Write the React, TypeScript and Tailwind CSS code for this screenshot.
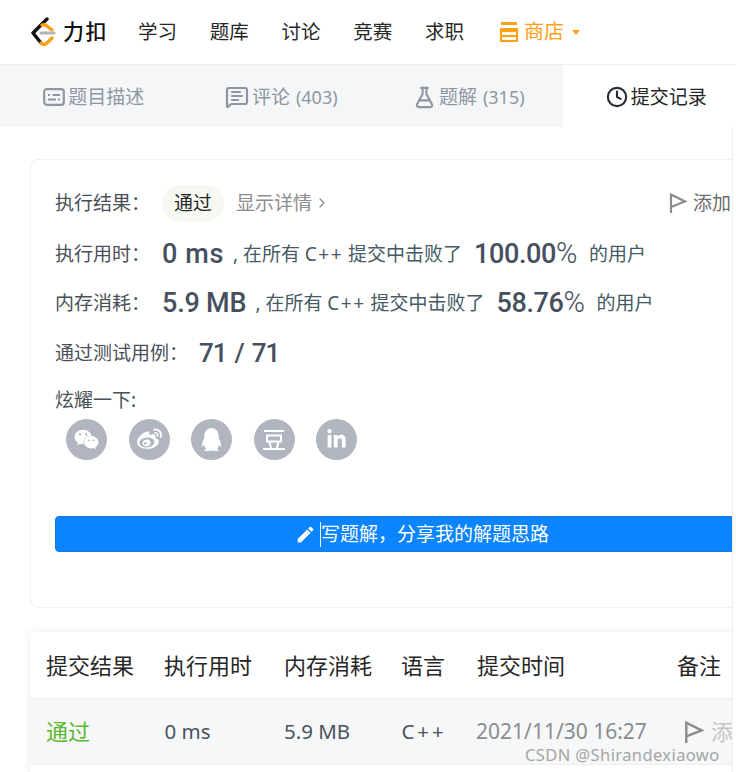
import { FaLinkedinIn, FaQq, FaWeibo, FaWeixin } from 'react-icons/fa'
import { MdEdit } from 'react-icons/md'
import { ChevronRight, Clock, FlaskConical, MessageSquareText } from 'lucide-react'

const cjk = "font-['Noto_Sans','Noto_Sans_CJK_SC',sans-serif]"
const din = "font-['Roboto','Noto_Sans_CJK_SC',sans-serif]"

function Logo() {
  return (
    <svg width="26" height="30" viewBox="0 0 26 30" fill="none">
      <path d="M17 2 L3 16 L11 26" stroke="#111" strokeWidth="3.4" strokeLinecap="round" strokeLinejoin="round" />
      <path d="M11 26 Q14 29 17 26 L22 21" stroke="#ffa116" strokeWidth="3.4" strokeLinecap="round" />
      <path d="M12 8 Q15 7 17 9 L22 13" stroke="#ffa116" strokeWidth="3.4" strokeLinecap="round" />
      <path d="M11 16 H24" stroke="#b3b3b3" strokeWidth="3" strokeLinecap="round" />
    </svg>
  )
}

function StoreIcon() {
  return (
    <svg width="20" height="20" viewBox="0 0 20 20" fill="none" stroke="#ffa116" strokeWidth="2.2">
      <path d="M2 1.5 H18" strokeWidth="3" />
      <path d="M1 6 H19 V9.5 H1 Z" fill="#ffa116" strokeWidth="0" />
      <rect x="2" y="9" width="16" height="10" />
      <path d="M2 14 H18" />
    </svg>
  )
}

function FlagIcon({ color = '#8c8c8c', size = 20 }: { color?: string; size?: number }) {
  return (
    <svg width={size} height={size} viewBox="0 0 20 20" fill="none" stroke={color} strokeWidth="2.2">
      <path d="M3 20 V1.5 L17 8.5 L3 14" strokeLinejoin="miter" />
    </svg>
  )
}

function CardIcon() {
  return (
    <svg width="22" height="18" viewBox="0 0 22 18" fill="none">
      <rect x="1.2" y="1.2" width="19.6" height="15.6" rx="2.5" stroke="#8f96a3" strokeWidth="2.2" />
      <path d="M5 7 H7 M9.5 7 H17 M5 11.5 H13 M15 11.5 H17" stroke="#8f96a3" strokeWidth="1.8" />
    </svg>
  )
}

function DoubanIcon() {
  return (
    <svg width="22" height="22" viewBox="0 0 22 22" fill="none" stroke="#fff" strokeWidth="2">
      <path d="M1 2 H21" />
      <rect x="4" y="6.5" width="14" height="6" />
      <path d="M6.5 13 L8 19 M15.5 13 L14 19" />
      <path d="M0 20 H22" />
    </svg>
  )
}

function Tab({ icon, label, count, active }: { icon: React.ReactNode; label: string; count?: string; active?: boolean }) {
  return (
    <div className={`flex items-center justify-center gap-[3px] relative text-[19px] pt-[2px] ${active ? 'bg-white text-[#262626]' : 'text-[#8f96a3]'}`}>
      {icon}
      <span>{label}</span>
      {count && <span className="text-[18px] ml-[3px]">{count}</span>}
    </div>
  )
}

function Social({ children }: { children: React.ReactNode }) {
  return <div className="w-[41px] h-[41px] rounded-full bg-[#b0b5bf] flex items-center justify-center text-white">{children}</div>
}

function Stat({ label, value, name, beat, valueClass }: { label: string; value: string; name: string; beat: string; valueClass: string }) {
  return (
    <div className="flex items-center h-[30px] whitespace-nowrap text-[#455a64]">
      <span className="w-[107px] text-[19px] text-[#4a4f57]">{label}</span>
      <span className={`${din} font-medium text-[27px] text-[#46505e] ${valueClass}`}>{value}</span>
      <span className="ml-[9px] text-[19px]">, 在所有 <span className="tracking-[1.5px]">{name}</span> 提交中击败了</span>
      <span className={`${din} font-medium text-[27px] text-[#46505e] ml-[12px] tracking-[-0.4px]`}>
        {beat}<span className="font-light text-[29px]">%</span>
      </span>
      <span className="ml-[12px] text-[19px]">的用户</span>
    </div>
  )
}

export default function App() {
  return (
    <div className={`${cjk} relative w-[736px] h-[772px] overflow-hidden bg-white`}>
      <header className="h-[65px] border-b border-[#eeeeee] flex items-center pl-[30px] text-[#262626]">
        <Logo />
        <span className="ml-[7px] text-[21px] font-medium text-[#111] tracking-[1.5px] w-[75px]">力扣</span>
        <nav className="flex items-center gap-[32.75px] text-[19.5px]">
          <span>学习</span>
          <span>题库</span>
          <span>讨论</span>
          <span>竞赛</span>
          <span>求职</span>
        </nav>
        <div className="ml-[35px] flex items-center text-[#ffa116] text-[20px]">
          <StoreIcon />
          <span className="ml-[5px]">商店</span>
          <span className="ml-[8px] w-0 h-0 border-x-[4px] border-x-transparent border-t-[5px] border-t-[#ffa116]" />
        </div>
      </header>

      <div className="w-[750px] h-[62px] grid grid-cols-4 bg-[#f5f6f8]">
        <Tab icon={<CardIcon />} label="题目描述" />
        <Tab icon={<MessageSquareText size={24} strokeWidth={2.2} />} label="评论" count="(403)" />
        <Tab icon={<FlaskConical size={23} strokeWidth={2.2} />} label="题解" count="(315)" />
        <Tab icon={<Clock size={22} strokeWidth={2.3} className="text-[#262b36]" />} label="提交记录" active />
      </div>

      <main className="w-[733px] overflow-hidden pl-[30px] pt-[32px] border-r border-[#f0f0f0]">
        <section className="w-[760px] h-[449px] border border-[#f0f0f0] rounded-[8px] pl-[24px] pt-[26px]">
          <div className="flex items-center h-[34px] text-[19px] text-[#4a4f57] whitespace-nowrap">
            <span className="w-[107px]">执行结果：</span>
            <span className="w-[62px] h-[37px] rounded-full bg-[#f6f9f2] flex items-center justify-center text-[#262626]">通过</span>
            <span className="ml-[12px] text-[#8c8c8c] flex items-center">
              显示详情<ChevronRight size={16} className="ml-[2px]" />
            </span>
            <span className="ml-[338px] text-[#6e6e6e] flex items-center gap-[5px]">
              <FlagIcon size={20} />添加备注
            </span>
          </div>
          <div className="mt-[19px] flex flex-col gap-[19px]">
            <Stat label="执行用时：" value="0 ms" name="C++" beat="100.00" valueClass="tracking-[0.6px]" />
            <Stat label="内存消耗：" value="5.9 MB" name="C++" beat="58.76" valueClass="tracking-[-0.2px]" />
          </div>
          <div className="mt-[20px] flex items-center h-[30px] text-[19px] text-[#4a4f57]">
            <span className="w-[144px]">通过测试用例：</span>
            <span className={`${din} font-medium text-[26px] text-[#46505e] tracking-[-1px] flex gap-[8px]`}>
              <span>71</span><span>/</span><span>71</span>
            </span>
          </div>
          <div className="mt-[20px] text-[19px] leading-[24px] text-[#4a4f57]">炫耀一下:</div>
          <div className="mt-[7px] ml-[11px] flex gap-[21.5px]">
            <Social><FaWeixin size={25} /></Social>
            <Social><FaWeibo size={25} /></Social>
            <Social><FaQq size={23} /></Social>
            <Social><DoubanIcon /></Social>
            <Social><FaLinkedinIn size={21} /></Social>
          </div>
          <button className="mt-[56px] w-[734px] h-[36px] rounded-[4px] bg-[#0a84ff] border border-[#1a78dc] text-white text-[19px] flex items-center justify-center">
            <MdEdit size={21} className="mr-[4px]" />
            <span className="w-px h-[25px] bg-white" />
            写题解，分享我的解题思路
          </button>
        </section>

        <section className="mt-[24px] w-[703px] bg-white shadow-[0_0_8px_rgba(0,0,0,0.08)]">
          <div className="h-[67px] border-b border-[#eeeeee] flex items-center text-[22px] text-[#262626] whitespace-nowrap">
            <span className="w-[134px] pl-[16px]">提交结果</span>
            <span className="w-[120px]">执行用时</span>
            <span className="w-[117px]">内存消耗</span>
            <span className="w-[76px]">语言</span>
            <span className="w-[200px]">提交时间</span>
            <span>备注</span>
          </div>
          <div className="h-[66px] border-b border-[#eeeeee] bg-[#f6f7f9] flex items-center text-[20.5px] text-[#4a5360] whitespace-nowrap">
            <span className="w-[135px] pl-[16px] text-[22px] text-[#5cb82e]">通过</span>
            <span className="w-[120px]">0 ms</span>
            <span className="w-[118px]">5.9 MB</span>
            <span className="w-[75px] tracking-[3px]">C++</span>
            <span className="w-[208px] text-[21px] text-[#8c8c8c]">2021/11/30 16:27</span>
            <FlagIcon size={22} />
            <span className="ml-[6px] text-[#c4c4c4] text-[22px]">添</span>
          </div>
          <div className="h-[20px]" />
        </section>
      </main>

      <span className="absolute left-[525px] top-[743px] text-[16.5px] text-[#a5a5a5] tracking-[0.4px]">CSDN @Shirandexiaowo</span>
    </div>
  )
}
